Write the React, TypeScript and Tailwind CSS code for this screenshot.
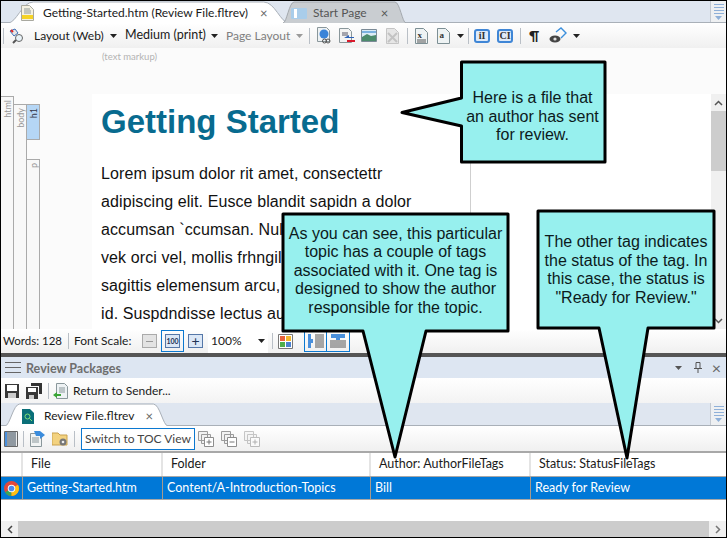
import type { ReactNode } from "react";

const uiFont = "font-['Lato',sans-serif]";
const copyFont = "font-['Liberation_Sans',Arial,sans-serif]";

const Caret = ({ color = "#222" }: { color?: string }) => (
  <svg width="7" height="4" viewBox="0 0 7 4" className="shrink-0">
    <path d="M0 0h7L3.5 4z" fill={color} />
  </svg>
);

const Sep = () => <div className="h-[16px] w-px shrink-0 bg-[#b9bfc6]" />;

const DocIcon = ({ letter, lines }: { letter?: string; lines?: boolean }) => (
  <svg width="13" height="16" viewBox="0 0 13 16" className="shrink-0">
    <path d="M.5.5h8l4 4v11H.5z" fill="#eef3f4" stroke="#7c8f94" />
    {letter && (
      <text x="2.5" y="10" fontSize="9" fontWeight="700" fontFamily="Liberation Serif" fill="#333">
        {letter}
      </text>
    )}
    {lines && <path d="M2 12h9M2 14h9" stroke="#555" />}
  </svg>
);

const BlueBox = ({ label }: { label: string }) => (
  <div className="flex h-[14px] w-[16px] shrink-0 items-center justify-center rounded-[3px] border-2 border-[#3f86d6] bg-[#dfeaf8] font-['Liberation_Serif',serif] text-[10px] leading-none font-bold text-[#333]">
    {label}
  </div>
);

const Save = ({ double }: { double?: boolean }) => (
  <svg width="16" height="16" viewBox="0 0 16 16" className="shrink-0">
    {double && <path d="M5 0h11v11h-3V3H5z" fill="#333" />}
    <path d={double ? "M0 4h12v12H0z" : "M1 1h14v14H1z"} fill="#383838" />
    <path d={double ? "M2 5h8v4H2z" : "M3 2h10v6H3z"} fill="#fff" />
    <path d={double ? "M3 12h5v4H3z" : "M4 10h8v5H4z"} fill="#ccc" />
  </svg>
);

const GrayPages = ({ sign, faint }: { sign: string; faint?: boolean }) => (
  <svg width="16" height="16" viewBox="0 0 16 16" className="shrink-0" opacity={faint ? 0.55 : 1}>
    <path d="M.5.5h9v9h-9zM3.5 3.5h9v9h-9z" fill="#f2f2f2" stroke="#9b9b9b" />
    <path d="M6.5 6.5h9v9h-9z" fill="#fff" stroke="#8d8d8d" />
    <path d={sign === "+" ? "M8.5 11h5M11 8.5v5" : "M8.5 11h5"} stroke="#777" />
  </svg>
);

const TabShape = ({ fill, stroke }: { fill: string; stroke: string }) => (
  <svg
    className="absolute inset-0 h-full w-full"
    viewBox="0 0 100 22"
    preserveAspectRatio="none"
  >
    <path
      d="M0 22 C3 22 5 1 9 1 L91 1 C95 1 97 22 100 22"
      fill={fill}
      stroke={stroke}
      vectorEffect="non-scaling-stroke"
    />
  </svg>
);

const OverflowButton = () => (
  <div className="flex h-full w-[16px] shrink-0 flex-col items-center justify-center gap-[2px] border-l border-[#c3c9d1] bg-[#eef0f2]">
    <div className="h-px w-[10px] bg-[#8fb0d8]" />
    <div className="h-px w-[10px] bg-[#8fb0d8]" />
    <div className="h-px w-[10px] bg-[#8fb0d8]" />
    <div className="h-px w-[10px] bg-[#8fb0d8]" />
    <Caret color="#8fb0d8" />
  </div>
);

const Callout = ({
  points,
  textClass,
  children,
}: {
  points: string;
  textClass: string;
  children: ReactNode;
}) => (
  <>
    <svg className="pointer-events-none absolute top-0 left-0 z-10" width="727" height="538">
      <polygon
        points={points}
        fill="#97f0ee"
        stroke="#000"
        strokeWidth="3"
        strokeLinejoin="round"
      />
    </svg>
    <div
      className={`absolute z-20 flex items-center justify-center text-center ${copyFont} text-[16px] leading-[18.5px] text-[#0c1a1c] ${textClass}`}
    >
      {children}
    </div>
  </>
);

const bodyLines = [
  "Lorem ipsum dolor rit amet, consectettr",
  "adipiscing elit. Eusce blandit sapidn a dolor",
  "accumsan `ccumsan. Nulla",
  "vek orci vel, mollis frhngilla",
  "sagittis elemensum arcu,",
  "id. Suspdndisse lectus au",
];

export default function App() {
  return (
    <div
      className={`relative flex h-[538px] w-[727px] flex-col overflow-hidden border border-black bg-white ${uiFont} text-[12px] text-[#1a1a1a]`}
    >
      {/* document tabs */}
      <div className="flex h-[22px] shrink-0 items-stretch border-b border-[#a9b0b8] bg-[#dfe6f0]">
        <div className="relative ml-[7px] h-[22px] w-[281px] shrink-0">
          <TabShape fill="#fff" stroke="#a9b0b8" />
          <div className="relative flex h-full items-center pt-[2px] pl-[13px]">
            <svg width="13" height="16" viewBox="0 0 13 16" className="shrink-0">
              <path d="M.5.5h8l4 4v11H.5z" fill="#f4f1e2" stroke="#a9a9a0" />
              <path d="M1 10h11v4H1z" fill="#f5d326" />
              <path d="M3 4h6M3 6h7M3 8h7" stroke="#8f9a9a" />
            </svg>
            <span className="ml-[9px] whitespace-nowrap">
              Getting-Started.htm (Review File.fltrev)
            </span>
            <span className="ml-[12px] text-[13px] leading-none text-[#666]">×</span>
          </div>
        </div>
        <div className="relative -ml-[6px] h-[22px] w-[123px] shrink-0">
          <TabShape fill="#c9cdd1" stroke="#a3a8ad" />
          <div className="relative flex h-full items-center pt-[2px] pl-[8px] text-[#555]">
            <div className="flex h-[11px] w-[16px] items-center rounded-[1px] bg-[#a9cdea] pl-[3px]">
              <div className="h-[9px] w-[3px] bg-white" />
            </div>
            <span className="ml-[6px] whitespace-nowrap">Start Page</span>
            <span className="ml-[14px] text-[13px] leading-none text-[#555]">×</span>
          </div>
        </div>
        <div className="flex-1" />
        <OverflowButton />
      </div>

      {/* editor toolbar */}
      <div className="flex h-[25px] shrink-0 items-center bg-gradient-to-b from-white to-[#f0f0f0] pl-[2px] whitespace-nowrap">
        <Sep />
        <svg width="16" height="16" viewBox="0 0 16 16" className="ml-[5px] shrink-0">
          <path d="M1 3l5-2 3 4-4 3z" fill="#e8e8e8" stroke="#3f6fb5" />
          <path d="M2 2l2 2" stroke="#d22" strokeWidth="2" />
          <circle cx="10" cy="10" r="3.5" fill="#e9f3f8" stroke="#666" />
          <path d="M7 12l-3 3" stroke="#555" strokeWidth="2" />
        </svg>
        <span className="ml-[9px] w-[71px]">Layout (Web)</span>
        <div className="ml-[5px]">
          <Caret />
        </div>
        <span className="ml-[8px] w-[81px] text-[12.5px]">Medium (print)</span>
        <div className="ml-[5px]">
          <Caret />
        </div>
        <span className="ml-[8px] w-[65px] text-[#7f7f7f]">Page Layout</span>
        <div className="ml-[5px]">
          <Caret color="#9a9a9a" />
        </div>
        <div className="ml-[6px]">
          <Sep />
        </div>
        <svg width="15" height="17" viewBox="0 0 15 17" className="ml-[7px] shrink-0">
          <path d="M.5.5h9l3 3v11H.5z" fill="#eef2f4" stroke="#8a979b" />
          <circle cx="7" cy="7" r="4.5" fill="#3a84d8" />
          <circle cx="11" cy="14" r="2" fill="none" stroke="#555" />
          <circle cx="7.5" cy="14" r="2" fill="none" stroke="#555" />
        </svg>
        <svg width="16" height="16" viewBox="0 0 16 16" className="ml-[7px] shrink-0">
          <path d="M.5.5h9l3 3v11H.5z" fill="#f3f3f3" stroke="#8a979b" />
          <path d="M3 5h6M3 7h6" stroke="#556" />
          <path d="M5 10l5-3v2h5v1z" fill="#2d62b8" />
          <path d="M8 12h8v2H8z" fill="#d8192a" />
        </svg>
        <svg width="16" height="13" viewBox="0 0 16 13" className="ml-[6px] shrink-0">
          <path d="M.5.5h15v12H.5z" fill="#dcecf6" stroke="#7b8a96" />
          <path d="M1 8l5-3 4 2 5-1v6H1z" fill="#4c8b6c" />
          <path d="M1 2h14v2H1z" fill="#7cb2e0" />
        </svg>
        <svg width="13" height="16" viewBox="0 0 13 16" className="ml-[9px] shrink-0">
          <path d="M.5.5h8l4 4v11H.5z" fill="#e6e6e6" stroke="#c5c5c5" />
          <path d="M2 5l9 9M11 5l-9 9" stroke="#c3c3c3" strokeWidth="2" />
        </svg>
        <div className="ml-[8px]">
          <Sep />
        </div>
        <div className="ml-[7px]">
          <DocIcon letter="x" lines />
        </div>
        <div className="ml-[9px]">
          <DocIcon letter="a" />
        </div>
        <div className="ml-[7px]">
          <Caret />
        </div>
        <div className="ml-[4px]">
          <Sep />
        </div>
        <div className="ml-[5px]">
          <BlueBox label="iI" />
        </div>
        <div className="ml-[7px]">
          <BlueBox label="CI" />
        </div>
        <div className="ml-[7px]">
          <Sep />
        </div>
        <span className="ml-[8px] text-[14px] font-bold text-[#222]">¶</span>
        <svg width="18" height="18" viewBox="0 0 18 18" className="ml-[10px] shrink-0">
          <path d="M7 5l5-4 5 5-5 5" fill="none" stroke="#3b8fdc" strokeWidth="1.4" />
          <ellipse cx="6" cy="12" rx="5.5" ry="3.5" fill="#444" />
          <circle cx="6" cy="12" r="1.6" fill="#ddd" />
        </svg>
        <div className="ml-[6px]">
          <Caret />
        </div>
      </div>

      {/* markup strip */}
      <div className="h-[46px] shrink-0 bg-[#fbfbfb] pt-[3px] pl-[101px] text-[9.5px] leading-[12px] text-[#b3b3b3]">
        (text markup)
      </div>

      {/* editor */}
      <div className="flex h-[235px] shrink-0 overflow-hidden">
        <div className="flex w-[91px] shrink-0 items-stretch bg-[#fbfbfb] text-[9px] leading-none">
          <div className="mt-[2px] flex w-[13px] shrink-0 items-start justify-center border-t border-r border-[#aaa] bg-[#f8f8f8] pt-[3px] text-[#999]">
            <span className="rotate-180 [writing-mode:vertical-rl]">html</span>
          </div>
          <div className="mt-[10px] flex w-[13px] shrink-0 items-start justify-center border-t border-r border-[#aaa] bg-[#f8f8f8] pt-[3px] text-[#999]">
            <span className="rotate-180 [writing-mode:vertical-rl]">body</span>
          </div>
          <div className="mt-[10px] flex w-[13px] shrink-0 flex-col">
            <div className="flex h-[36px] items-start justify-center border-t border-r border-b border-[#aaa] bg-[#b5d6f5] pt-[3px] text-[#334]">
              <span className="rotate-180 [writing-mode:vertical-rl]">h1</span>
            </div>
            <div className="mt-[19px] flex flex-1 items-start justify-center border-t border-r border-[#aaa] bg-[#f8f8f8] pt-[3px] text-[#999]">
              <span className="rotate-180 [writing-mode:vertical-rl]">p</span>
            </div>
          </div>
        </div>
        <div className={`w-[379px] shrink-0 border-r border-[#cfcfcf] bg-white pl-[9px] ${copyFont}`}>
          <h1 className="mt-[6px] text-[33px] leading-[44px] font-bold text-[#086b8f]">
            Getting Started
          </h1>
          <div className="mt-[16px] text-[16px] leading-[28px] tracking-[0.1px] text-[#111]">
            {bodyLines.map((line) => (
              <div key={line} className="whitespace-nowrap">
                {line}
              </div>
            ))}
          </div>
        </div>
        <div className="flex-1 bg-white" />
        <div className="flex w-[15px] shrink-0 flex-col bg-[#f0f0f0]">
          <div className="flex h-[17px] items-center justify-center text-[#555]">
            <svg width="9" height="6" viewBox="0 0 9 6">
              <path d="M1 5l3.5-3.5L8 5" fill="none" stroke="#555" strokeWidth="1.5" />
            </svg>
          </div>
          <div className="h-[60px] bg-[#cdcdcd]" />
          <div className="flex-1" />
          <div className="flex h-[17px] items-center justify-center">
            <svg width="9" height="6" viewBox="0 0 9 6">
              <path d="M1 1l3.5 3.5L8 1" fill="none" stroke="#555" strokeWidth="1.5" />
            </svg>
          </div>
        </div>
      </div>

      {/* status row */}
      <div className="flex h-[24px] shrink-0 items-center bg-gradient-to-b from-white to-[#f0f0f0] pl-[2px] whitespace-nowrap">
        <span className="w-[59px] text-[11.5px]">Words: 128</span>
        <div className="ml-[6px]">
          <Sep />
        </div>
        <span className="ml-[5px] w-[57px]">Font Scale:</span>
        <div className="ml-[11px] flex h-[14px] w-[15px] items-center justify-center border border-[#aaa] bg-[#e3e3e3]">
          <div className="h-px w-[7px] bg-[#999]" />
        </div>
        <div className="ml-[4px] flex h-[22px] w-[23px] items-center justify-center border border-[#0b78d0]">
          <div className="flex h-[14px] w-[15px] items-center justify-center border border-[#5577a8] bg-[#dbe7f6] text-[7px] leading-none font-bold text-[#235]">
            100
          </div>
        </div>
        <div className="ml-[4px] flex h-[14px] w-[15px] items-center justify-center border border-[#5577a8] bg-[#dbe7f6] text-[14px] leading-none text-[#235]">
          +
        </div>
        <div className="ml-[5px] flex h-[24px] w-[60px] items-center justify-between bg-white pr-[3px] pl-[3px]">
          <span>100%</span>
          <Caret />
        </div>
        <div className="ml-[4px]">
          <Sep />
        </div>
        <svg width="15" height="15" viewBox="0 0 15 15" className="ml-[5px] shrink-0">
          <path d="M.5.5h14v14H.5z" fill="#fff" stroke="#777" />
          <path d="M2 2h5v5H2z" fill="#e8613c" />
          <path d="M8 2h5v5H8z" fill="#f3b62b" />
          <path d="M2 8h5v5H2z" fill="#4fae4b" />
          <path d="M8 8h5v5H8z" fill="#4c82d0" />
        </svg>
        <div className="ml-[11px] flex h-[22px]">
          <div className="flex w-[23px] items-center justify-center border border-[#0b78d0]">
            <svg width="16" height="14" viewBox="0 0 16 14">
              <path d="M0 0h3v14H0zM3 5h2v4H3z" fill="#4a90dc" />
              <path d="M7 1h9M7 3h9M7 5h9M7 7h9M7 9h9M7 11h9M7 13h9" stroke="#555" />
            </svg>
          </div>
          <div className="flex w-[23px] items-center justify-center border border-l-0 border-[#0b78d0]">
            <svg width="16" height="14" viewBox="0 0 16 14">
              <path d="M1 0h14v4H1zM6 4h4v2H6z" fill="#4a90dc" />
              <path d="M0 7h16M0 9h16M0 11h16M0 13h16" stroke="#555" />
            </svg>
          </div>
        </div>
      </div>

      <div className="h-[4px] shrink-0 bg-[#555]" />

      {/* review packages */}
      <div className="flex h-[21px] shrink-0 items-center bg-[#dde6f2] pr-[5px] pl-[4px] text-[#6d6d6d]">
        <div className="flex w-[16px] flex-col gap-[4px]">
          <div className="h-px bg-[#666]" />
          <div className="h-px bg-[#666]" />
          <div className="h-px bg-[#666]" />
        </div>
        <span className="mt-[4px] ml-[5px] text-[12.5px] font-bold">Review Packages</span>
        <div className="flex-1" />
        <Caret color="#555" />
        <svg width="8" height="11" viewBox="0 0 8 11" className="ml-[12px]">
          <path d="M2 .5h4v6H2zM0 6.5h8M4 7v4" fill="none" stroke="#555" />
        </svg>
        <span className="ml-[10px] text-[16px] leading-none text-[#666]">×</span>
      </div>

      <div className="flex h-[25px] shrink-0 items-center bg-gradient-to-b from-white to-[#f3f3f3] pl-[3px]">
        <Save />
        <div className="ml-[6px]">
          <Save double />
        </div>
        <div className="ml-[6px]">
          <Sep />
        </div>
        <svg width="15" height="16" viewBox="0 0 15 16" className="ml-[4px] shrink-0">
          <path d="M3.5.5h8l3 3v12h-11z" fill="#eef2f4" stroke="#8a979b" />
          <path d="M6 5h6M6 7h6M6 9h6" stroke="#8a979b" />
          <path d="M0 12l4-3v2h4v2H4v2z" fill="#3aa535" />
        </svg>
        <span className="ml-[5px]">Return to Sender...</span>
      </div>

      {/* review file tabs */}
      <div className="flex h-[23px] shrink-0 items-stretch border-b border-[#a9b0b8] bg-[#dfe6f0]">
        <div className="relative ml-[4px] h-[23px] w-[163px] shrink-0">
          <TabShape fill="#fff" stroke="#a9b0b8" />
          <div className="relative flex h-full items-center pt-[3px] pl-[17px]">
            <svg width="12" height="15" viewBox="0 0 12 15" className="shrink-0">
              <path d="M0 0h8l4 4v11H0z" fill="#0a6f78" />
              <circle cx="5.5" cy="7.5" r="2.5" fill="none" stroke="#7fe07a" />
              <path d="M7.5 9.5l2.5 2.5" stroke="#7fe07a" />
            </svg>
            <span className="ml-[10px] whitespace-nowrap">Review File.fltrev</span>
            <span className="ml-[11px] text-[13px] leading-none text-[#666]">×</span>
          </div>
        </div>
        <div className="flex-1" />
        <OverflowButton />
      </div>

      <div className="flex h-[25px] shrink-0 items-center bg-gradient-to-b from-white to-[#f0f0f0] pl-[3px] whitespace-nowrap">
        <svg width="14" height="16" viewBox="0 0 14 16" className="shrink-0">
          <path d="M.5.5h13v15H.5z" fill="#eee" stroke="#666" />
          <path d="M3 2h9M3 4h9M3 6h9M3 8h9M3 10h9M3 12h9M3 14h9" stroke="#345" />
          <path d="M1 1h2v14H1z" fill="#4a90dc" />
        </svg>
        <div className="ml-[5px]">
          <Sep />
        </div>
        <svg width="15" height="16" viewBox="0 0 15 16" className="ml-[6px] shrink-0">
          <path d="M.5 2.5h9l2 2v11H.5z" fill="#f1f4f4" stroke="#8a979b" />
          <path d="M2 7h7M2 9h7M2 11h7" stroke="#8a979b" />
          <path d="M4 0h6l5 4-5 4V5H6z" fill="#3a8cdc" />
        </svg>
        <svg width="16" height="15" viewBox="0 0 16 15" className="ml-[7px] shrink-0">
          <path d="M0 2h6l2 2h7v10H0z" fill="#f3d27f" stroke="#c9a14f" />
          <circle cx="11" cy="11" r="3.5" fill="#777" />
          <circle cx="11" cy="11" r="1.3" fill="#eee" />
        </svg>
        <div className="ml-[6px]">
          <Sep />
        </div>
        <div className="ml-[6px] flex h-[22px] w-[114px] items-center justify-center border border-[#0b78d0] bg-white text-[#444]">
          Switch to TOC View
        </div>
        <div className="ml-[3px]">
          <GrayPages sign="+" />
        </div>
        <div className="ml-[7px]">
          <GrayPages sign="-" />
        </div>
        <div className="ml-[7px]">
          <GrayPages sign="+" faint />
        </div>
      </div>

      {/* file table */}
      <div className="grid shrink-0 grid-cols-[22px_140px_208px_160px_1fr] border-t-2 border-[#a8a8a8] text-[12.5px]">
        <div className="h-[23px] border-r-2 border-[#e4e4e4]" />
        <div className="flex h-[23px] items-center border-r-2 border-[#e4e4e4] pl-[8px]">File</div>
        <div className="flex h-[23px] items-center border-r-2 border-[#e4e4e4] pl-[8px]">Folder</div>
        <div className="flex h-[23px] items-center border-r-2 border-[#e4e4e4] pl-[8px]">
          Author: AuthorFileTags
        </div>
        <div className="flex h-[23px] items-center pl-[8px]">Status: StatusFileTags</div>
        <div className="col-span-5 grid grid-cols-subgrid border-y border-[#a8a8a8] bg-[#0078d7] text-white">
          <div className="flex h-[22px] items-center justify-center border-r border-[#a89a8c]">
            <svg width="15" height="15" viewBox="0 0 16 16">
              <circle cx="8" cy="8" r="8" fill="#e2483b" />
              <path d="M8 8L1.1 12A8 8 0 0 0 8 16z" fill="#3aa757" />
              <path d="M8 8v8a8 8 0 0 0 6.9-12z" fill="#fbc116" />
              <circle cx="8" cy="8" r="4" fill="#fff" />
              <circle cx="8" cy="8" r="3" fill="#4a8af0" />
            </svg>
          </div>
          <div className="flex h-[22px] items-center border-r border-[#a89a8c] pl-[4px]">
            Getting-Started.htm
          </div>
          <div className="flex h-[22px] items-center border-r border-[#a89a8c] pl-[4px]">
            Content/A-Introduction-Topics
          </div>
          <div className="flex h-[22px] items-center border-r border-[#a89a8c] pl-[4px]">Bill</div>
          <div className="flex h-[22px] items-center pl-[4px]">Ready for Review</div>
        </div>
      </div>
      <div className="flex-1 bg-white" />

      {/* bottom scrollbar */}
      <div className="flex h-[16px] shrink-0 bg-[#cccccc]">
        <div className="flex w-[17px] items-center justify-center bg-[#f0f0f0]">
          <svg width="6" height="9" viewBox="0 0 6 9">
            <path d="M5 1L1.5 4.5 5 8" fill="none" stroke="#444" strokeWidth="1.5" />
          </svg>
        </div>
        <div className="flex-1" />
        <div className="flex w-[17px] items-center justify-center bg-[#f0f0f0]">
          <svg width="6" height="9" viewBox="0 0 6 9">
            <path d="M1 1l3.5 3.5L1 8" fill="none" stroke="#777" strokeWidth="1.5" />
          </svg>
        </div>
      </div>

      {/* callouts */}
      <Callout
        points="460.5,61 604,61 604,161 460.5,161 460.5,125 401,111.5 460.5,97"
        textClass="top-[88px] left-[460px] h-[56px] w-[143px]"
      >
        <span>
          Here is a file that
          <br />
          an author has sent
          <br />
          for review.
        </span>
      </Callout>
      <Callout
        points="282,213 507,213 507,330 425,330 394,456 362,330 282,330"
        textClass="top-[223px] left-[282px] h-[94px] w-[225px]"
      >
        <span>
          As you can see, this particular
          <br />
          topic has a couple of tags
          <br />
          associated with it. One tag is
          <br />
          designed to show the author
          <br />
          responsible for the topic.
        </span>
      </Callout>
      <Callout
        points="537,210 713,210 713,327 647,327 626,457 598,327 537,327"
        textClass="top-[232px] left-[537px] h-[74px] w-[176px]"
      >
        <span>
          The other tag indicates
          <br />
          the status of the tag. In
          <br />
          this case, the status is
          <br />
          "Ready for Review."
        </span>
      </Callout>
    </div>
  );
}
